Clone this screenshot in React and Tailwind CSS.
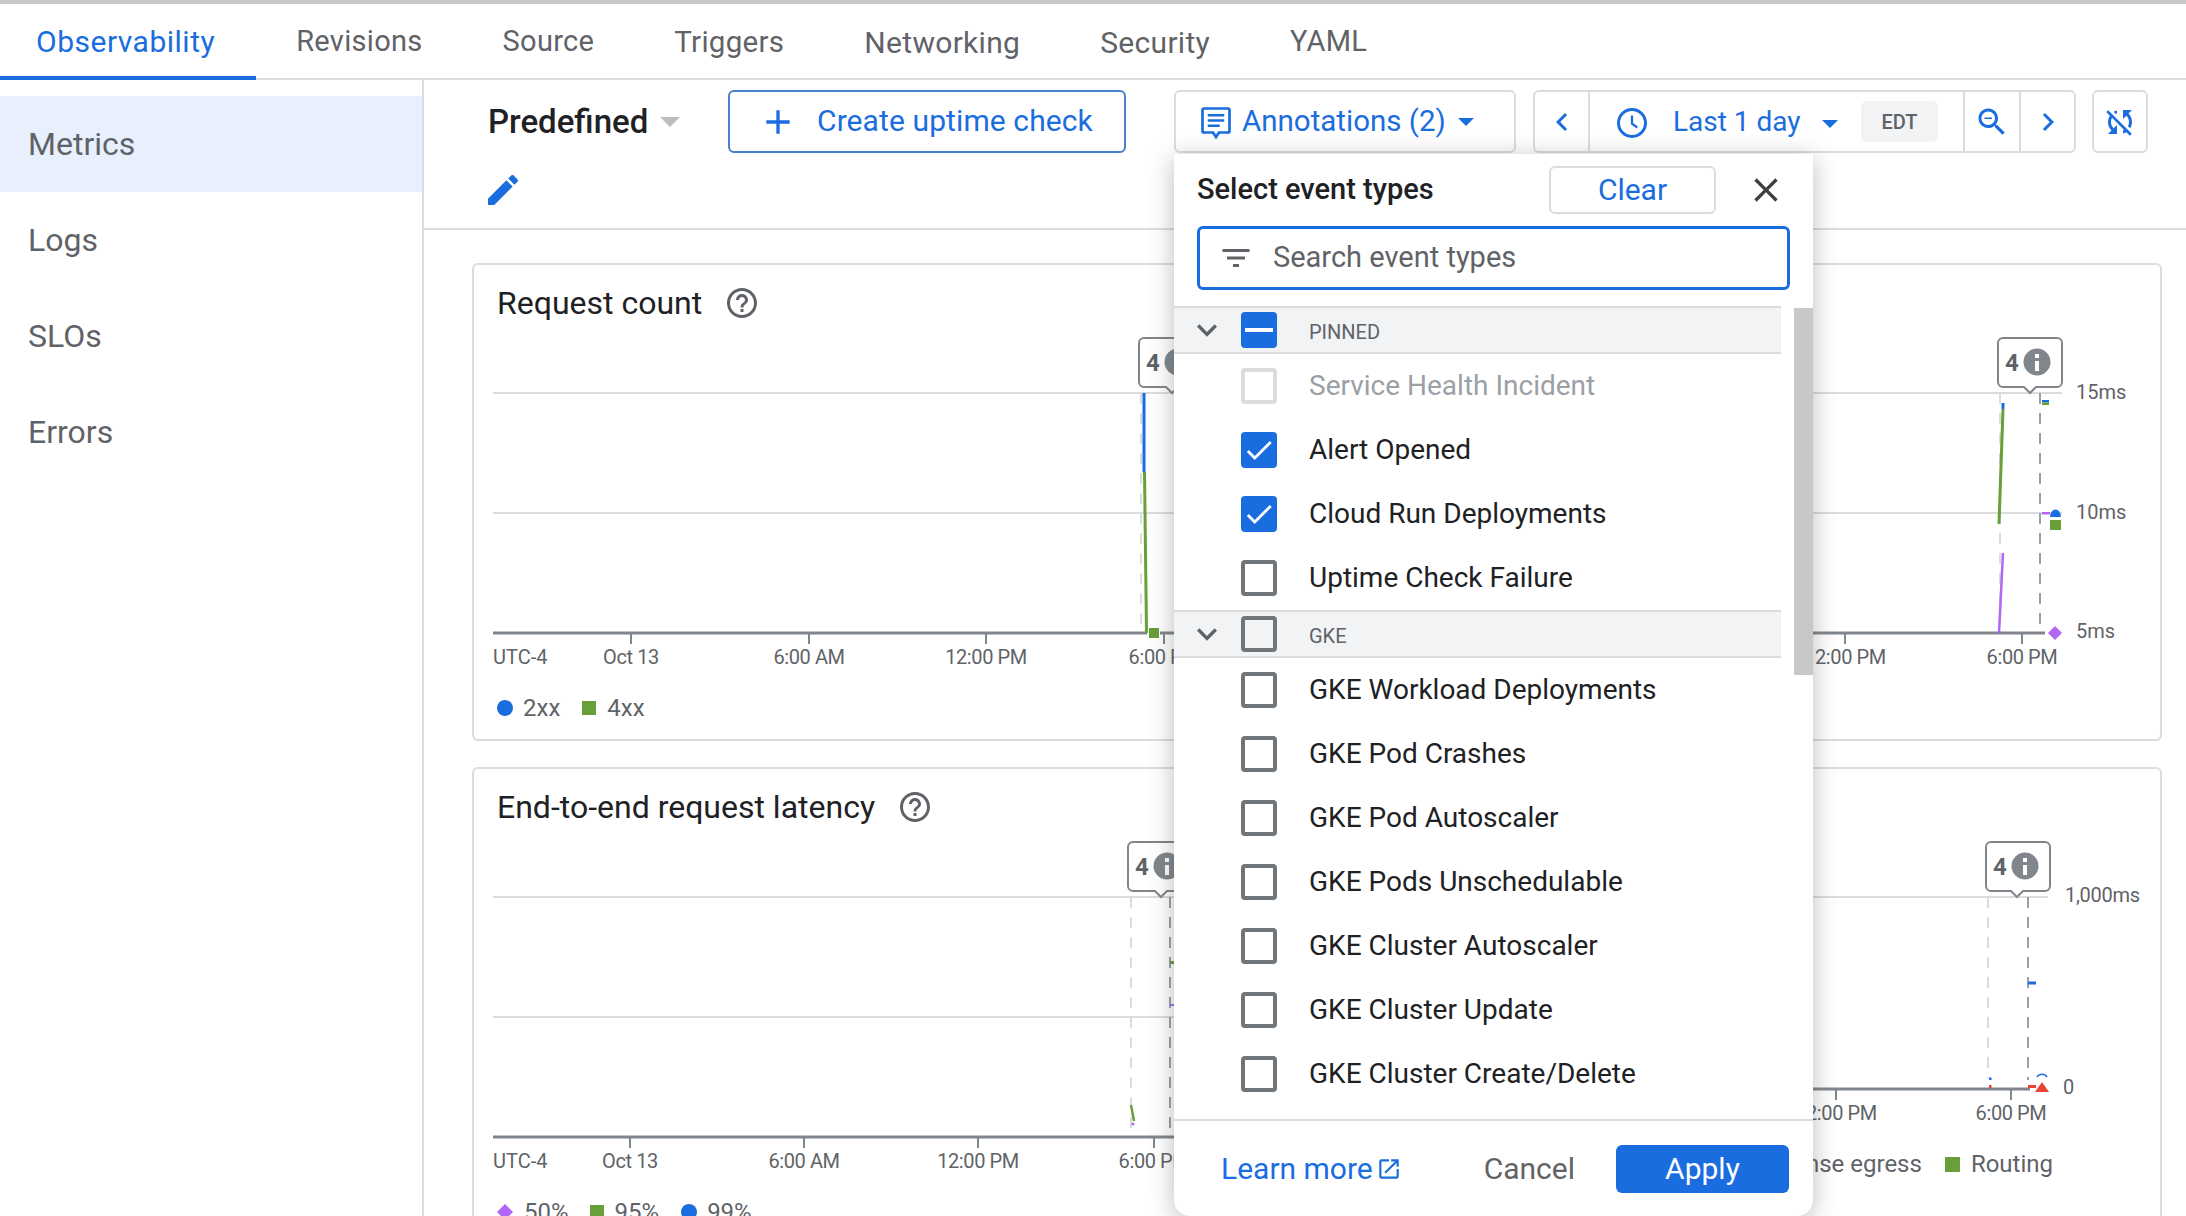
import React from 'react';

const BLUE = '#1a6ddf';

function Icon({ d, className, fill = 'currentColor' }) {
  return (
    <svg viewBox="0 0 24 24" className={className} fill={fill}>
      <path d={d} />
    </svg>
  );
}

const ICONS = {
  add: 'M19 13h-6v6h-2v-6H5v-2h6V5h2v6h6v2z',
  edit: 'M3 17.25V21h3.75L17.81 9.94l-3.75-3.75L3 17.25zM20.71 7.04c.39-.39.39-1.02 0-1.41l-2.34-2.34c-.39-.39-1.02-.39-1.41 0l-1.83 1.83 3.75 3.75 1.83-1.83z',
  help: 'M11 18h2v-2h-2v2zm1-16C6.48 2 2 6.48 2 12s4.48 10 10 10 10-4.48 10-10S17.52 2 12 2zm0 18c-4.41 0-8-3.59-8-8s3.59-8 8-8 8 3.59 8 8-3.59 8-8 8zm0-14c-2.21 0-4 1.79-4 4h2c0-1.1.9-2 2-2s2 .9 2 2c0 2-3 1.75-3 5h2c0-2.25 3-2.5 3-5 0-2.21-1.79-4-4-4z',
  zoomOut: 'M15.5 14h-.79l-.28-.27C15.41 12.59 16 11.11 16 9.5 16 5.91 13.09 3 9.5 3S3 5.91 3 9.5 5.91 16 9.5 16c1.61 0 3.09-.59 4.23-1.57l.27.28v.79l5 4.99L20.49 19l-4.99-5zm-6 0C7.01 14 5 11.99 5 9.5S7.01 5 9.5 5 14 7.01 14 9.5 11.99 14 9.5 14zM7 9h5v1H7z',
  left: 'M15.41 7.41L14 6l-6 6 6 6 1.41-1.41L10.83 12z',
  right: 'M10 6L8.59 7.41 13.17 12l-4.58 4.59L10 18l6-6z',
  filter: 'M10 18h4v-2h-4v2zM3 6v2h18V6H3zm3 7h12v-2H6v2z',
  close: 'M19 6.41L17.59 5 12 10.59 6.41 5 5 6.41 10.59 12 5 17.59 6.41 19 12 13.41 17.59 19 19 17.59 13.41 12z',
  expand: 'M16.59 8.59L12 13.17 7.41 8.59 6 10l6 6 6-6z',
  open: 'M19 19H5V5h7V3H5c-1.11 0-2 .9-2 2v14c0 1.1.89 2 2 2h14c1.1 0 2-.9 2-2v-7h-2v7zM14 3v2h3.59l-9.83 9.83 1.41 1.41L19 6.41V10h2V3h-7z',
  check: 'M9 16.17L4.83 12l-1.41 1.41L9 19 21 7l-1.41-1.41z',
  syncOff: 'M10 6.35V4.26c-.8.21-1.55.54-2.23.96l1.46 1.46c.25-.12.5-.24.77-.33zm-7.14-.94l2.36 2.36C4.45 8.99 4 10.44 4 12c0 2.21.91 4.2 2.36 5.64L4 20h6v-6l-2.24 2.24C6.68 15.15 6 13.66 6 12c0-1 .25-1.94.68-2.77l8.08 8.08c-.25.13-.5.25-.77.34v2.09c.8-.21 1.55-.54 2.23-.96l2.36 2.36 1.27-1.27L4.14 4.14 2.86 5.41zM20 4h-6v6l2.24-2.24C17.32 8.85 18 10.34 18 12c0 1-.25 1.94-.68 2.77l1.46 1.46C19.55 15.01 20 13.56 20 12c0-2.21-.91-4.2-2.36-5.64L20 4z',
};

const TABS = [
  { label: 'Observability', cls: 'pl-[36px] pr-[41px] text-[30px] tracking-[0.5px] text-[#1a6ddf] border-b-4 border-[#1a6ddf] -mb-[2px]' },
  { label: 'Revisions', cls: 'px-[40px] text-[29px] tracking-[0.3px] text-[#5f6368]' },
  { label: 'Source', cls: 'px-[40px] text-[29px] tracking-[0.3px] text-[#5f6368]' },
  { label: 'Triggers', cls: 'px-[40px] text-[29.500px] tracking-[0.3px] text-[#5f6368]' },
  { label: 'Networking', cls: 'px-[40px] text-[30px] tracking-[0.3px] text-[#5f6368]' },
  { label: 'Security', cls: 'px-[40px] text-[30px] tracking-[0.3px] text-[#5f6368]' },
  { label: 'YAML', cls: 'px-[40px] text-[29px] tracking-[0.3px] text-[#5f6368]' },
];
const NAV = ['Metrics', 'Logs', 'SLOs', 'Errors'];
const GKE_ITEMS = [
  'GKE Workload Deployments',
  'GKE Pod Crashes',
  'GKE Pod Autoscaler',
  'GKE Pods Unschedulable',
  'GKE Cluster Autoscaler',
  'GKE Cluster Update',
  'GKE Cluster Create/Delete',
];

function Checkbox({ state = 'off' }) {
  if (state === 'on' || state === 'mixed') {
    return (
      <span className="w-9 h-9 rounded-[4px] bg-[#1a6ddf] flex items-center justify-center shrink-0">
        {state === 'on' ? (
          <Icon d={ICONS.check} className="w-[34px] h-[34px] text-white" />
        ) : (
          <span className="w-7 h-[4px] bg-white" />
        )}
      </span>
    );
  }
  if (state === 'disabled') {
    return <span className="w-9 h-9 rounded-[4px] border-4 border-[#dadce0] shrink-0" />;
  }
  return <span className="w-9 h-9 rounded-[4px] border-4 border-[#70757a] shrink-0" />;
}

function GroupRow({ label, state }) {
  return (
    <div className="h-[48px] flex items-center bg-[#f1f3f4] border-y-2 border-[#dadce0]">
      <Icon d={ICONS.expand} className="w-10 h-10 text-[#5f6368] ml-[13px] mr-[14px] shrink-0" />
      <Checkbox state={state} />
      <span className="ml-[32px] text-[20px] text-[#5f6368] mt-[3px]">{label}</span>
    </div>
  );
}

function EventRow({ label, state }) {
  return (
    <div className="h-[64px] flex items-center pl-[67px]">
      <Checkbox state={state} />
      <span className={`ml-[32px] text-[28px] -mt-[1px] ${state === 'disabled' ? 'text-[#9aa0a6]' : 'text-[#202124]'}`}>{label}</span>
    </div>
  );
}

function Bubble({ x, tip }) {
  return (
    <g>
      <path
        d={`M${x + 6} 338h54a5 5 0 0 1 5 5v39a5 5 0 0 1-5 5H${tip + 6}l-6 6-6-6H${x + 6}a5 5 0 0 1-5-5v-39a5 5 0 0 1 5-5z`}
        fill="#fff"
        stroke="#80868b"
        strokeWidth="2"
      />
      <text x={x + 15} y="371" textAnchor="middle" fontSize="24" fontWeight="700" fill="#5f6368">4</text>
      <circle cx={x + 40} cy="362" r="13.5" fill="#80868b" />
      <rect x={x + 38} y="361" width="4" height="10" fill="#fff" />
      <rect x={x + 38} y="354" width="4" height="4" fill="#fff" />
    </g>
  );
}

function Dashed({ x, y1, y2, dark }) {
  return <line x1={x} x2={x} y1={y1} y2={y2} stroke={dark ? '#9aa0a6' : '#dadce0'} strokeWidth="2" strokeDasharray="11 9" />;
}

function Tick({ x, axis, label }) {
  return (
    <g>
      <line x1={x} x2={x} y1={axis} y2={axis + 11} stroke="#80868b" strokeWidth="2" />
      <text x={x} y={axis + 31} textAnchor="middle" fontSize="20" fill="#5f6368" letterSpacing="-0.4">{label}</text>
    </g>
  );
}

function Grid({ x1, x2, ys, axis, axisEnd }) {
  return (
    <g>
      {ys.map((y) => (
        <line key={y} x1={x1} x2={x2} y1={y} y2={y} stroke="#dadce0" strokeWidth="2" />
      ))}
      <line x1={x1} x2={axisEnd} y1={axis} y2={axis} stroke="#80868b" strokeWidth="3" />
    </g>
  );
}

// chart drawings use page coordinates through the viewBox
function RequestCountChart() {
  return (
    <svg viewBox="474 335 854 340" className="w-[854px] h-[340px] block">
      <Grid x1={493} x2={1328} ys={[393, 513]} axis={633} axisEnd={1147} />
      <line x1={1160} x2={1328} y1={633} y2={633} stroke="#80868b" strokeWidth="3" />
      <text x={493} y={664} fontSize="20" fill="#5f6368">UTC-4</text>
      <Tick x={631} axis={633} label="Oct 13" />
      <Tick x={809} axis={633} label="6:00 AM" />
      <Tick x={986} axis={633} label="12:00 PM" />
      <Tick x={1164} axis={633} label="6:00 PM" />
      <Dashed x={1141} y1={393} y2={632} />
      <line x1={1144} x2={1144} y1={393} y2={472} stroke={BLUE} strokeWidth="3" />
      <line x1={1144.5} x2={1146.5} y1={472} y2={633} stroke="#689f38" strokeWidth="3" />
      <rect x={1149} y={628} width={10} height={10} fill="#689f38" />
      <Bubble x={1138} tip={1172} />
    </svg>
  );
}

function LatencyChartRight() {
  return (
    <svg viewBox="1328 335 832 340" className="w-[832px] h-[340px] block">
      <Grid x1={1328} x2={2062} ys={[393, 513]} axis={633} axisEnd={2045} />
      <Tick x={1845} axis={633} label="12:00 PM" />
      <Tick x={2022} axis={633} label="6:00 PM" />
      <text x={2076} y={399} fontSize="20" fill="#5f6368">15ms</text>
      <text x={2076} y={519} fontSize="20" fill="#5f6368">10ms</text>
      <text x={2076} y={638} fontSize="20" fill="#5f6368">5ms</text>
      <Dashed x={2000} y1={393} y2={632} />
      <Dashed x={2040} y1={393} y2={625} dark />
      <line x1={2003} x2={2003} y1={403} y2={409} stroke={BLUE} strokeWidth="3" />
      <line x1={2003} x2={1999} y1={409} y2={524} stroke="#689f38" strokeWidth="3" />
      <line x1={2003} x2={1999} y1={553} y2={633} stroke="#b366f6" strokeWidth="2.5" />
      <rect x={2042} y={400} width={7} height={2.5} fill={BLUE} />
      <rect x={2042} y={402.5} width={7} height={2.5} fill="#689f38" />
      <rect x={2042} y={512} width={8} height={2.5} fill="#b366f6" />
      <path d="M2050 517a5.5 7.500 0 0 1 11 0z" fill={BLUE} />
      <rect x={2050} y={520} width={11} height={10} fill="#689f38" />
      <path d="M2055 626l7 7-7 7-7-7z" fill="#b366f6" />
      <Bubble x={1997} tip={2030} />
    </svg>
  );
}

function LatencyLeft() {
  return (
    <svg viewBox="474 839 854 340" className="w-[854px] h-[340px] block">
      <Grid x1={493} x2={1328} ys={[897, 1017]} axis={1137} axisEnd={1328} />
      <text x={493} y={1168} fontSize="20" fill="#5f6368">UTC-4</text>
      <Tick x={630} axis={1137} label="Oct 13" />
      <Tick x={804} axis={1137} label="6:00 AM" />
      <Tick x={978} axis={1137} label="12:00 PM" />
      <Tick x={1154} axis={1137} label="6:00 PM" />
      <Dashed x={1131} y1={897} y2={1136} />
      <Dashed x={1170} y1={897} y2={1130} dark />
      <line x1={1131} x2={1134} y1={1105} y2={1121} stroke="#689f38" strokeWidth="2.5" />
      <circle cx={1133} cy={1124} r={1.5} fill="#b366f6" />
      <rect x={1170} y={961} width={4} height={3} fill="#689f38" />
      <rect x={1170} y={1004} width={4} height={2} fill="#b366f6" />
      <g transform="translate(0 504)">
        <Bubble x={1127} tip={1161} />
      </g>
    </svg>
  );
}

function RightLower() {
  return (
    <svg viewBox="1328 839 832 300" className="w-[832px] h-[300px] block">
      <Grid x1={1328} x2={2048} ys={[897]} axis={1089} axisEnd={2030} />
      <Tick x={1836} axis={1089} label="12:00 PM" />
      <Tick x={2011} axis={1089} label="6:00 PM" />
      <text x={2065} y={902} fontSize="20" fill="#5f6368" letterSpacing="-0.3">1,000ms</text>
      <text x={2063} y={1094} fontSize="20" fill="#5f6368">0</text>
      <Dashed x={1988} y1={897} y2={1078} />
      <Dashed x={2028} y1={897} y2={1080} dark />
      <rect x={2028} y={981.500} width={8} height={3} fill={BLUE} />
      <rect x={1989} y={1077.500} width={2.500} height={2.500} fill={BLUE} />
      <rect x={1989} y={1085} width={2.500} height={3} fill="#ea4335" />
      <rect x={2028} y={1085} width={8} height={3} fill="#ea4335" />
      <path d="M2037 1077a6 6 0 0 1 10 0" fill="none" stroke={BLUE} strokeWidth="1.500" />
      <path d="M2042 1082l7 10h-14z" fill="#ea4335" />
      <g transform="translate(0 504)">
        <Bubble x={1985} tip={2017} />
      </g>
    </svg>
  );
}

function CardTitle({ children }) {
  return (
    <div className="h-[70px] pl-[23px] pt-[5px] flex items-center gap-[22px] text-[32px] text-[#202124]">
      {children}
      <Icon d={ICONS.help} className="w-9 h-9 text-[#5f6368]" />
    </div>
  );
}

function Legend({ children, className }) {
  return <div className={`flex items-center text-[24px] text-[#5f6368] ${className}`}>{children}</div>;
}

function Popover() {
  return (
    <div className="absolute left-[1174px] top-[154px] w-[639px] h-[1062px] bg-white rounded-b-[16px] shadow-[0_4px_24px_rgba(60,64,67,0.35)] overflow-hidden z-10 flex flex-col">
      <div className="h-[72px] pl-[23px] pr-[24px] flex items-center shrink-0">
        <span className="text-[29px] font-medium text-[#202124]">Select event types</span>
        <button className="ml-auto w-[167px] h-[48px] border-2 border-[#dadce0] rounded-[6px] text-[30px] leading-[40px] text-[#1a6ddf]">Clear</button>
        <Icon d={ICONS.close} className="ml-[30px] mr-[3px] w-[40px] h-[40px] text-[#3c4043]" />
      </div>
      <div className="mx-[23px] h-[64px] border-[3px] border-[#1a6ddf] rounded-[6px] flex items-center shrink-0">
        <Icon d={ICONS.filter} className="ml-[18px] w-9 h-9 text-[#5f6368]" />
        <span className="ml-[19px] text-[29px] text-[#5f6368]">Search event types</span>
      </div>
      <div className="relative flex-1 mt-[16px]">
        <div className="w-[607px]">
          <GroupRow label="PINNED" state="mixed" />
          <EventRow label="Service Health Incident" state="disabled" />
          <EventRow label="Alert Opened" state="on" />
          <EventRow label="Cloud Run Deployments" state="on" />
          <EventRow label="Uptime Check Failure" />
          <GroupRow label="GKE" />
          {GKE_ITEMS.map((item) => (
            <EventRow key={item} label={item} />
          ))}
        </div>
        <div className="absolute right-0 top-[2px] w-[19px] h-[367px] bg-[#c8c8c8]" />
      </div>
      <div className="h-[97px] border-t-2 border-[#dadce0] flex items-center pl-[47px] pr-[24px] shrink-0">
        <span className="text-[30px] text-[#1a6ddf]">Learn more</span>
        <Icon d={ICONS.open} className="ml-[3px] w-[26px] h-[26px] text-[#1a6ddf]" />
        <span className="ml-auto text-[30px] text-[#5f6368]">Cancel</span>
        <button className="ml-[41px] w-[173px] h-[48px] bg-[#1a6ddf] rounded-[6px] text-white text-[30px]">Apply</button>
      </div>
    </div>
  );
}

function Toolbar() {
  return (
    <div className="h-[150px] border-b-2 border-[#dadce0] pl-[64px] pt-[10px] shrink-0">
      <div className="flex items-center h-[63px]">
        <span className="w-[162px] text-[33px] font-medium text-[#202124] whitespace-nowrap">Predefined</span>
        <span className="ml-[10px] w-0 h-0 border-x-[10px] border-x-transparent border-t-[10px] border-t-[#bdbdbd]" />
        <div className="ml-[48px] w-[398px] h-[63px] border-2 border-[#4a7fc9] rounded-[6px] flex items-center text-[#1a6ddf]">
          <Icon d={ICONS.add} className="ml-[28px] w-[40px] h-[40px]" />
          <span className="ml-[19px] text-[30px] tracking-[0.1px] -mt-[2px]">Create uptime check</span>
        </div>
        <div className="ml-[48px] w-[342px] h-[63px] border-2 border-[#dadce0] rounded-[6px] flex items-center text-[#1a6ddf]">
          <svg viewBox="0 0 24 24" className="ml-[22px] w-[36px] h-[36px]" fill="none" stroke="currentColor" strokeWidth="1.800">
            <path d="M4 3h16a1 1 0 0 1 1 1v14a1 1 0 0 1-1 1h-6l-2 3-2-3H4a1 1 0 0 1-1-1V4a1 1 0 0 1 1-1z" />
            <path d="M6.500 7.500h11M6.500 11h11M6.500 14.500h8" />
          </svg>
          <span className="ml-[8px] text-[29.500px]">Annotations (2)</span>
          <span className="ml-[12px] w-0 h-0 border-x-[8px] border-x-transparent border-t-[8px] border-t-[#1a6ddf]" />
        </div>
        <div className="ml-[17px] w-[543px] h-[63px] border-2 border-[#dadce0] rounded-[6px] flex items-stretch text-[#1a6ddf]">
          <div className="w-[55px] border-r-2 border-[#dadce0] flex items-center justify-center">
            <Icon d={ICONS.left} className="w-9 h-9" />
          </div>
          <div className="w-[375px] border-r-2 border-[#dadce0] flex items-center">
            <svg viewBox="0 0 24 24" className="ml-[24px] mt-[3px] w-[36px] h-[36px]" fill="none" stroke="currentColor" strokeWidth="2">
              <circle cx="12" cy="12" r="9" />
              <path d="M12 7v5.500l3.500 2.500" strokeWidth="1.500" />
            </svg>
            <span className="ml-[23px] w-[129px] text-[28px] whitespace-nowrap">Last 1 day</span>
            <span className="ml-[20px] mt-[4px] w-0 h-0 border-x-[8px] border-x-transparent border-t-[8px] border-t-[#1a6ddf]" />
            <span className="ml-[23px] w-[77px] h-[41px] rounded-[6px] bg-[#f1f3f4] text-[#5f6368] text-[20px] font-medium flex items-center justify-center">EDT</span>
          </div>
          <div className="w-[56px] border-r-2 border-[#dadce0] flex items-center justify-center">
            <Icon d={ICONS.zoomOut} className="w-9 h-9" />
          </div>
          <div className="flex-1 flex items-center justify-center">
            <Icon d={ICONS.right} className="w-9 h-9" />
          </div>
        </div>
        <div className="ml-[16px] w-[56px] h-[63px] border-2 border-[#dadce0] rounded-[6px] flex items-center justify-center text-[#1a6ddf]">
          <Icon d={ICONS.syncOff} className="w-[36px] h-[36px]" />
        </div>
      </div>
      <Icon d={ICONS.edit} className="w-[40px] h-[40px] -ml-[5px] mt-[17px] text-[#1a6ddf]" />
    </div>
  );
}

export default function App() {
  return (
    <div className="w-[2186px] h-[1216px] overflow-hidden relative bg-white font-['Roboto',sans-serif]">
      <div className="h-[4px] bg-[#c8c8c8]" />
      <div className="h-[76px] border-b-2 border-[#dadce0] flex items-stretch">
        {TABS.map((tab) => (
          <div key={tab.label} className={`flex items-center pt-[2px] ${tab.cls}`}>
            {tab.label}
          </div>
        ))}
      </div>
      <div className="flex">
        <div className="w-[424px] h-[1136px] border-r-2 border-[#dadce0] pt-[16px] shrink-0">
          {NAV.map((item, i) => (
            <div
              key={item}
              className={`h-[96px] flex items-center pl-[28px] text-[32px] text-[#5f6368] ${i === 0 ? 'bg-[#e8f0fe] text-[#3c4043]' : ''}`}
            >
              {item}
            </div>
          ))}
        </div>
        <div className="flex-1 min-w-0">
          <Toolbar />
          <div className="pl-[48px] pr-[24px] pt-[33px] grid grid-cols-[856px_834px] gap-y-[26px]">
            <div className="h-[478px] border-2 border-r-0 border-[#dadce0] rounded-l-[6px] overflow-hidden">
              <CardTitle>Request count</CardTitle>
              <RequestCountChart />
              <Legend className="mt-[15px] pl-[23px]">
                <span className="w-4 h-4 rounded-full bg-[#1a6ddf]" />
                <span className="ml-[10px]">2xx</span>
                <span className="ml-[22px] w-[14px] h-[14px] bg-[#689f38]" />
                <span className="ml-[11px]">4xx</span>
              </Legend>
            </div>
            <div className="h-[478px] border-2 border-l-0 border-[#dadce0] rounded-r-[6px] overflow-hidden">
              <div className="h-[70px]" />
              <LatencyChartRight />
            </div>
            <div className="h-[500px] border-2 border-r-0 border-[#dadce0] rounded-l-[6px] overflow-hidden">
              <CardTitle>End-to-end request latency</CardTitle>
              <LatencyLeft />
              <Legend className="mt-[15px] pl-[23px]">
                <svg viewBox="0 0 16 16" className="w-4 h-4"><path d="M8 0l8 8-8 8-8-8z" fill="#b366f6" /></svg>
                <span className="ml-[11px]">50%</span>
                <span className="ml-[21px] w-[14px] h-[14px] bg-[#689f38]" />
                <span className="ml-[11px]">95%</span>
                <span className="ml-[22px] w-4 h-4 rounded-full bg-[#1a6ddf]" />
                <span className="ml-[10px]">99%</span>
              </Legend>
            </div>
            <div className="h-[500px] border-2 border-l-0 border-[#dadce0] rounded-r-[6px] overflow-hidden">
              <div className="h-[70px]" />
              <RightLower />
              <Legend className="mt-[7px] justify-end pr-[107px]">
                <span>Response egress</span>
                <span className="ml-[23px] w-[15px] h-[15px] bg-[#689f38]" />
                <span className="ml-[11px]">Routing</span>
              </Legend>
            </div>
          </div>
        </div>
      </div>
      <Popover />
    </div>
  );
}
